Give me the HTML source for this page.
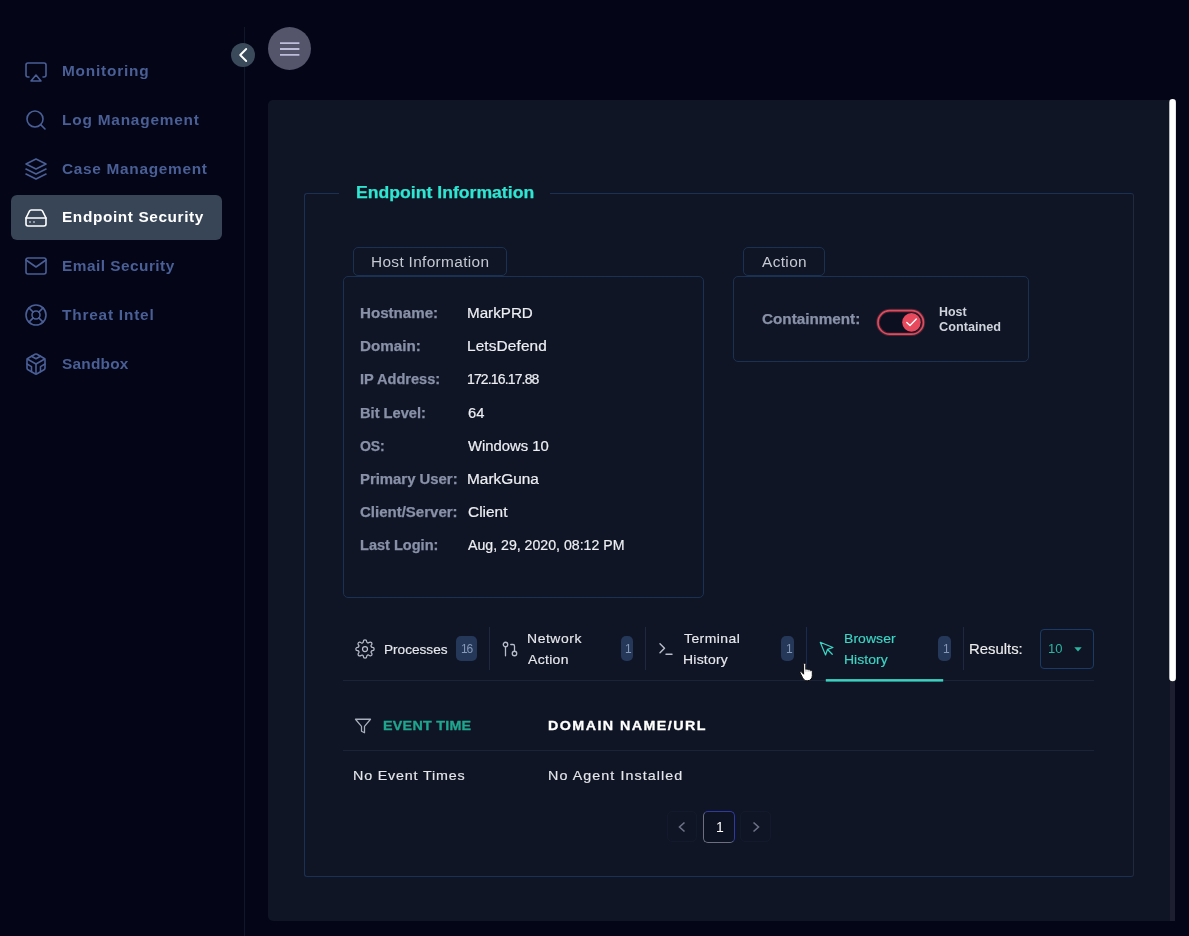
<!DOCTYPE html>
<html lang="en"><head><meta charset="utf-8"><title>Endpoint Security</title>
<style>
html,body{margin:0;padding:0}
body{width:1189px;height:936px;overflow:hidden;background:#040517;font-family:"Liberation Sans",sans-serif;position:relative}
.t{position:absolute;line-height:20px;white-space:nowrap;margin:0;transform-origin:0 50%;will-change:transform}
.i{position:absolute;display:block;overflow:visible}
.a{position:absolute;box-sizing:border-box}
ul{list-style:none;margin:0;padding:0}
#side{position:absolute;left:0;top:0;width:245px;height:936px}
#side .rule{left:244px;top:27px;width:1px;height:909px;background:#10172a}
#side li.on::before{content:"";position:absolute;left:11px;top:195px;width:211px;height:45px;border-radius:6px;background:#374557}
#collapse{left:231px;top:43px;width:24px;height:24px;border-radius:50%;background:#3a4a5b}
#burger{left:268px;top:27px;width:43px;height:43px;border-radius:50%;background:#54546a}
#panel{left:268px;top:100px;width:907px;height:821px;background:#0f1525;border-radius:5px 0 0 5px}
#track{left:1170px;top:100px;width:5px;height:821px;background:#1d1f30}
.bx{border:1px solid #1b3152;border-radius:5px}
#fs{left:304px;top:193px;width:830px;height:684px;border:1px solid #1a3153;border-right-color:#212a3c;border-radius:3px}
#lgap{left:339px;top:192px;width:211px;height:3px;background:#0f1525}
.badge{background:#25385a;border-radius:5px;top:636px;height:25px}
.dv{top:627px;width:1px;height:43px;background:#1d2940}
.hr{height:1px;background:#1b2437;left:343px;width:751px}
</style></head>
<body>
<nav id="side">
<div class="a rule"></div>
<ul>
<li><svg class="i" style="left:24px;top:59.8px" width="24" height="24" viewBox="0 0 24 24" fill="none" stroke="#4a5f96" stroke-width="1.6" stroke-linecap="round" stroke-linejoin="round" ><path d="M5 17H4a2 2 0 0 1-2-2V5a2 2 0 0 1 2-2h16a2 2 0 0 1 2 2v10a2 2 0 0 1-2 2h-1"/><polygon points="12 15 17 21 7 21 12 15"/></svg><span class="t" style="left:61.80px;top:61.15px;font-size:14px;font-weight:bold;color:#4a5f96;letter-spacing:0.714px;transform:scaleX(1.100);">Monitoring</span></li>
<li><svg class="i" style="left:24px;top:108.3px" width="24" height="24" viewBox="0 0 24 24" fill="none" stroke="#4a5f96" stroke-width="1.6" stroke-linecap="round" stroke-linejoin="round" ><circle cx="11" cy="11" r="8"/><line x1="21" y1="21" x2="16.65" y2="16.65"/></svg><span class="t" style="left:61.80px;top:109.90px;font-size:14px;font-weight:bold;color:#4a5f96;letter-spacing:0.720px;transform:scaleX(1.100);">Log Management</span></li>
<li><svg class="i" style="left:24px;top:157.1px" width="24" height="24" viewBox="0 0 24 24" fill="none" stroke="#4a5f96" stroke-width="1.6" stroke-linecap="round" stroke-linejoin="round" ><polygon points="12 2 2 7 12 12 22 7 12 2"/><polyline points="2 17 12 22 22 17"/><polyline points="2 12 12 17 22 12"/></svg><span class="t" style="left:61.80px;top:158.65px;font-size:14px;font-weight:bold;color:#4a5f96;letter-spacing:0.630px;transform:scaleX(1.100);">Case Management</span></li>
<li class="on"><svg class="i" style="left:24px;top:205.8px" width="24" height="24" viewBox="0 0 24 24" fill="none" stroke="#ffffff" stroke-width="1.6" stroke-linecap="round" stroke-linejoin="round" ><line x1="22" y1="12" x2="2" y2="12"/><path d="M5.45 5.11L2 12v6a2 2 0 0 0 2 2h16a2 2 0 0 0 2-2v-6l-3.45-6.89A2 2 0 0 0 16.76 4H7.24a2 2 0 0 0-1.79 1.11z"/><line x1="6" y1="16" x2="6.01" y2="16"/><line x1="10" y1="16" x2="10.01" y2="16"/></svg><span class="t" style="left:61.80px;top:207.40px;font-size:14px;font-weight:bold;color:#ffffff;letter-spacing:0.545px;transform:scaleX(1.100);">Endpoint Security</span></li>
<li><svg class="i" style="left:24px;top:254.3px" width="24" height="24" viewBox="0 0 24 24" fill="none" stroke="#4a5f96" stroke-width="1.6" stroke-linecap="round" stroke-linejoin="round" ><path d="M4 4h16c1.1 0 2 .9 2 2v12c0 1.1-.9 2-2 2H4c-1.1 0-2-.9-2-2V6c0-1.1.9-2 2-2z"/><polyline points="22,6 12,13 2,6"/></svg><span class="t" style="left:61.80px;top:256.15px;font-size:14px;font-weight:bold;color:#4a5f96;letter-spacing:0.428px;transform:scaleX(1.100);">Email Security</span></li>
<li><svg class="i" style="left:24px;top:303.0px" width="24" height="24" viewBox="0 0 24 24" fill="none" stroke="#4a5f96" stroke-width="1.6" stroke-linecap="round" stroke-linejoin="round" ><circle cx="12" cy="12" r="10"/><circle cx="12" cy="12" r="4"/><line x1="4.93" y1="4.93" x2="9.17" y2="9.17"/><line x1="14.83" y1="14.83" x2="19.07" y2="19.07"/><line x1="14.83" y1="9.17" x2="19.07" y2="4.93"/><line x1="4.93" y1="19.07" x2="9.17" y2="14.83"/></svg><span class="t" style="left:61.80px;top:304.90px;font-size:14px;font-weight:bold;color:#4a5f96;letter-spacing:0.717px;transform:scaleX(1.100);">Threat Intel</span></li>
<li><svg class="i" style="left:24px;top:351.8px" width="24" height="24" viewBox="0 0 24 24" fill="none" stroke="#4a5f96" stroke-width="1.6" stroke-linecap="round" stroke-linejoin="round" ><path d="M21 16V8a2 2 0 0 0-1-1.73l-7-4a2 2 0 0 0-2 0l-7 4A2 2 0 0 0 3 8v8a2 2 0 0 0 1 1.73l7 4a2 2 0 0 0 2 0l7-4A2 2 0 0 0 21 16z"/><polyline points="7.5 4.21 12 6.81 16.5 4.21"/><polyline points="7.5 19.79 7.5 14.6 3 12"/><polyline points="21 12 16.5 14.6 16.5 19.79"/><polyline points="3.27 6.96 12 12.01 20.73 6.96"/><line x1="12" y1="22.08" x2="12" y2="12"/></svg><span class="t" style="left:61.80px;top:353.65px;font-size:14px;font-weight:bold;color:#4a5f96;letter-spacing:0.202px;transform:scaleX(1.100);">Sandbox</span></li>
</ul>
</nav>
<div class="a" id="collapse"><svg class="i" style="left:0px;top:0px" width="24" height="24" viewBox="0 0 24 24" fill="none" stroke="#ffffff" stroke-width="1.9" stroke-linecap="round" stroke-linejoin="round" ><polyline points="15.2 18 9.2 12 15.2 6"/></svg></div>
<div class="a" id="burger"><svg class="i" style="left:12px;top:15px" width="20" height="14" viewBox="0 0 20 14"><path d="M0 1.1h19.4M0 7h19.4M0 12.9h19.4" stroke="#bdbdda" stroke-width="1.9" fill="none"/></svg></div>
<main>
<div class="a" id="panel"></div>
<div class="a" id="track"></div>
<svg class="i" id="thumb" style="left:1165px;top:95px" width="16" height="592" viewBox="0 0 16 592"><rect x="4.3" y="4.1" width="6.6" height="582.2" rx="3.3" fill="#fff"/></svg>
<section>
<div class="a" id="fs"></div>
<div class="a" id="lgap"></div>
<span class="t" style="left:355.60px;top:182.76px;font-size:16px;font-weight:bold;color:#2ee6d1;letter-spacing:0.011px;transform:scaleX(1.100);-webkit-text-stroke:.25px currentColor;">Endpoint Information</span>
<div class="a bx" style="left:353px;top:247px;width:154px;height:29px;border-radius:5px"></div>
<div class="a bx" style="left:343px;top:276px;width:361px;height:322px;background:#0f1525"></div>
<span class="t" style="left:370.90px;top:251.55px;font-size:14px;font-weight:normal;color:#c5c9d2;letter-spacing:0.302px;transform:scaleX(1.100);">Host Information</span>
<div class="a bx" style="left:743px;top:247px;width:82px;height:29px;border-radius:5px"></div>
<div class="a bx" style="left:733px;top:276px;width:296px;height:86px;background:#0f1525"></div>
<span class="t" style="left:761.90px;top:251.55px;font-size:14px;font-weight:normal;color:#c5c9d2;letter-spacing:0.339px;transform:scaleX(1.100);">Action</span>
<div id="hostinfo">
<span class="t" style="left:360.00px;top:303.15px;font-size:14px;font-weight:bold;color:#8891a8;letter-spacing:0.000px;transform:scaleX(1.080);-webkit-text-stroke:.25px currentColor;">Hostname:</span>
<span class="t" style="left:466.62px;top:303.15px;font-size:14px;font-weight:normal;color:#eceef2;letter-spacing:0.000px;transform:scaleX(1.085);-webkit-text-stroke:.2px currentColor;">MarkPRD</span>
<span class="t" style="left:360.00px;top:336.28px;font-size:14px;font-weight:bold;color:#8891a8;letter-spacing:0.000px;transform:scaleX(1.084);-webkit-text-stroke:.25px currentColor;">Domain:</span>
<span class="t" style="left:466.60px;top:336.28px;font-size:14px;font-weight:normal;color:#eceef2;letter-spacing:0.111px;transform:scaleX(1.100);-webkit-text-stroke:.2px currentColor;">LetsDefend</span>
<span class="t" style="left:360.00px;top:369.41px;font-size:14px;font-weight:bold;color:#8891a8;letter-spacing:-0.000px;transform:scaleX(1.040);-webkit-text-stroke:.25px currentColor;">IP Address:</span>
<span class="t" style="left:466.70px;top:369.41px;font-size:14px;font-weight:normal;color:#eceef2;letter-spacing:-0.851px;transform:scaleX(1.000);-webkit-text-stroke:.2px currentColor;">172.16.17.88</span>
<span class="t" style="left:360.00px;top:402.54px;font-size:14px;font-weight:bold;color:#8891a8;letter-spacing:0.000px;transform:scaleX(1.047);-webkit-text-stroke:.25px currentColor;">Bit Level:</span>
<span class="t" style="left:467.70px;top:402.54px;font-size:14px;font-weight:normal;color:#eceef2;letter-spacing:0.000px;transform:scaleX(1.052);-webkit-text-stroke:.2px currentColor;">64</span>
<span class="t" style="left:360.00px;top:435.67px;font-size:14px;font-weight:bold;color:#8891a8;letter-spacing:-0.114px;transform:scaleX(1.000);-webkit-text-stroke:.25px currentColor;">OS:</span>
<span class="t" style="left:467.70px;top:435.67px;font-size:14px;font-weight:normal;color:#eceef2;letter-spacing:0.000px;transform:scaleX(1.059);-webkit-text-stroke:.2px currentColor;">Windows 10</span>
<span class="t" style="left:360.00px;top:468.80px;font-size:14px;font-weight:bold;color:#8891a8;letter-spacing:0.000px;transform:scaleX(1.063);-webkit-text-stroke:.25px currentColor;">Primary User:</span>
<span class="t" style="left:466.60px;top:468.80px;font-size:14px;font-weight:normal;color:#eceef2;letter-spacing:0.000px;transform:scaleX(1.100);-webkit-text-stroke:.2px currentColor;">MarkGuna</span>
<span class="t" style="left:360.00px;top:501.93px;font-size:14px;font-weight:bold;color:#8891a8;letter-spacing:0.000px;transform:scaleX(1.072);-webkit-text-stroke:.25px currentColor;">Client/Server:</span>
<span class="t" style="left:467.70px;top:501.93px;font-size:14px;font-weight:normal;color:#eceef2;letter-spacing:0.019px;transform:scaleX(1.100);-webkit-text-stroke:.2px currentColor;">Client</span>
<span class="t" style="left:360.00px;top:535.06px;font-size:14px;font-weight:bold;color:#8891a8;letter-spacing:0.000px;transform:scaleX(1.039);-webkit-text-stroke:.25px currentColor;">Last Login:</span>
<span class="t" style="left:467.70px;top:535.06px;font-size:14px;font-weight:normal;color:#eceef2;letter-spacing:0.000px;transform:scaleX(1.010);-webkit-text-stroke:.2px currentColor;">Aug, 29, 2020, 08:12 PM</span>
</div>
<div id="action">
<span class="t" style="left:762.10px;top:309.15px;font-size:14px;font-weight:bold;color:#8891a8;letter-spacing:0.000px;transform:scaleX(1.089);-webkit-text-stroke:.25px currentColor;">Containment:</span>
<svg class="i" style="left:875px;top:308px" width="52" height="30" viewBox="0 0 52 30"><rect x="3" y="2.6" width="45.400" height="23.600" rx="11.800" fill="#0b0f1f" stroke="rgba(222,76,94,.28)" stroke-width="3.6"/><rect x="3" y="2.600" width="45.400" height="23.600" rx="11.800" fill="none" stroke="#de4c5e" stroke-width="1.7"/><circle cx="36.500" cy="14.350" r="9.300" fill="#e8495d"/><polyline points="31.800 14.400 35 17.500 41.300 11" fill="none" stroke="#fff" stroke-width="1.400" stroke-linecap="round" stroke-linejoin="round"/></svg>
<span class="t" style="left:938.90px;top:301.84px;font-size:12px;font-weight:bold;color:#cfd3dc;letter-spacing:-0.000px;transform:scaleX(1.035);">Host</span>
<span class="t" style="left:938.90px;top:316.54px;font-size:12px;font-weight:bold;color:#cfd3dc;letter-spacing:0.000px;transform:scaleX(1.058);">Contained</span>
</div>
<div id="tabs">
<svg class="i" style="left:354.75px;top:638.6px" width="20" height="20" viewBox="0 0 24 24" fill="none" stroke="#b9bdcb" stroke-width="1.5" stroke-linecap="round" stroke-linejoin="round" ><circle cx="12" cy="12" r="3"/><path d="M19.4 15a1.65 1.65 0 0 0 .33 1.82l.06.06a2 2 0 0 1 0 2.83 2 2 0 0 1-2.83 0l-.06-.06a1.65 1.65 0 0 0-1.82-.33 1.65 1.65 0 0 0-1 1.51V21a2 2 0 0 1-2 2 2 2 0 0 1-2-2v-.09A1.65 1.65 0 0 0 9 19.4a1.65 1.65 0 0 0-1.82.33l-.06.06a2 2 0 0 1-2.83 0 2 2 0 0 1 0-2.83l.06-.06a1.65 1.65 0 0 0 .33-1.82 1.65 1.65 0 0 0-1.51-1H3a2 2 0 0 1-2-2 2 2 0 0 1 2-2h.09A1.65 1.65 0 0 0 4.6 9a1.65 1.65 0 0 0-.33-1.82l-.06-.06a2 2 0 0 1 0-2.83 2 2 0 0 1 2.83 0l.06.06a1.65 1.65 0 0 0 1.82.33H9a1.65 1.65 0 0 0 1-1.51V3a2 2 0 0 1 2-2 2 2 0 0 1 2 2v.09a1.65 1.65 0 0 0 1 1.51 1.65 1.65 0 0 0 1.82-.33l.06-.06a2 2 0 0 1 2.83 0 2 2 0 0 1 0 2.83l-.06.06a1.65 1.65 0 0 0-.33 1.82V9a1.65 1.65 0 0 0 1.51 1H21a2 2 0 0 1 2 2 2 2 0 0 1-2 2h-.09a1.65 1.65 0 0 0-1.51 1z"/></svg>
<span class="t" style="left:383.63px;top:639.60px;font-size:12.7px;font-weight:normal;color:#e6e8ec;letter-spacing:0.000px;transform:scaleX(1.073);-webkit-text-stroke:.15px currentColor;">Processes</span>
<div class="a badge" style="left:456px;width:21px"></div><span class="t" style="left:460.50px;top:639.14px;font-size:12px;font-weight:normal;color:#8798b6;letter-spacing:-1.174px;transform:scaleX(1.000);">16</span>
<div class="a dv" style="left:489px"></div>
<svg class="i" style="left:500.6px;top:639.8px" width="18" height="18" viewBox="0 0 24 24" fill="none" stroke="#b9bdcb" stroke-width="1.7" stroke-linecap="round" stroke-linejoin="round" ><circle cx="18" cy="18" r="3"/><circle cx="6" cy="6" r="3"/><path d="M13 6h3a2 2 0 0 1 2 2v7"/><line x1="6" y1="9" x2="6" y2="21"/></svg>
<span class="t" style="left:526.50px;top:628.80px;font-size:12.7px;font-weight:normal;color:#e6e8ec;letter-spacing:0.499px;transform:scaleX(1.100);-webkit-text-stroke:.15px currentColor;">Network</span>
<span class="t" style="left:527.60px;top:649.80px;font-size:12.7px;font-weight:normal;color:#e6e8ec;letter-spacing:0.304px;transform:scaleX(1.100);-webkit-text-stroke:.15px currentColor;">Action</span>
<div class="a badge" style="left:621px;width:12px"></div><span class="t" style="left:625.20px;top:639.14px;font-size:12px;font-weight:normal;color:#8798b6;letter-spacing:0.000px;transform:scaleX(1.000);">1</span>
<div class="a dv" style="left:645px"></div>
<svg class="i" style="left:656.5px;top:639.7px" width="18" height="18" viewBox="0 0 24 24" fill="none" stroke="#b9bdcb" stroke-width="1.9" stroke-linecap="round" stroke-linejoin="round" ><polyline points="4 17 10 11 4 5"/><line x1="12" y1="19" x2="20" y2="19"/></svg>
<span class="t" style="left:684.40px;top:628.80px;font-size:12.7px;font-weight:normal;color:#e6e8ec;letter-spacing:0.398px;transform:scaleX(1.100);-webkit-text-stroke:.15px currentColor;">Terminal</span>
<span class="t" style="left:683.30px;top:649.80px;font-size:12.7px;font-weight:normal;color:#e6e8ec;letter-spacing:0.205px;transform:scaleX(1.100);-webkit-text-stroke:.15px currentColor;">History</span>
<div class="a badge" style="left:781px;width:13px"></div><span class="t" style="left:785.70px;top:639.14px;font-size:12px;font-weight:normal;color:#8798b6;letter-spacing:0.000px;transform:scaleX(1.000);">1</span>
<div class="a dv" style="left:806px;background:#182c4e"></div>
<svg class="i" style="left:817.6px;top:639.7px" width="18" height="18" viewBox="0 0 24 24" fill="none" stroke="#3cd6c4" stroke-width="1.6" stroke-linecap="round" stroke-linejoin="round" ><path d="M3 3l7.07 16.97 2.51-7.39 7.39-2.51L3 3z"/><path d="M13 13l6 6"/></svg>
<span class="t" style="left:843.70px;top:628.80px;font-size:12.7px;font-weight:normal;color:#3cd6c4;letter-spacing:0.070px;transform:scaleX(1.100);-webkit-text-stroke:.15px currentColor;">Browser</span>
<span class="t" style="left:843.70px;top:649.80px;font-size:12.7px;font-weight:normal;color:#3cd6c4;letter-spacing:0.039px;transform:scaleX(1.100);-webkit-text-stroke:.15px currentColor;">History</span>
<div class="a badge" style="left:938px;width:13px"></div><span class="t" style="left:942.70px;top:639.14px;font-size:12px;font-weight:normal;color:#8798b6;letter-spacing:0.000px;transform:scaleX(1.000);">1</span>
<div class="a dv" style="left:963px"></div>
<span class="t" style="left:969.24px;top:638.65px;font-size:14px;font-weight:normal;color:#ececec;letter-spacing:0.000px;transform:scaleX(1.062);-webkit-text-stroke:.15px currentColor;">Results:</span>
<div class="a" style="left:1040px;top:629px;width:54px;height:40px;border:1px solid #1c3a68;border-radius:4px"></div>
<span class="t" style="left:1047.50px;top:638.80px;font-size:13px;font-weight:normal;color:#2bb5a0;letter-spacing:-0.030px;transform:scaleX(1.000);">10</span>
<svg class="i" style="left:1074px;top:646.5px" width="8" height="5" viewBox="0 0 8 5"><path d="M0.3 0.3h7.4L4 4.6z" fill="#2bb5a0"/></svg>
<div class="a hr" style="top:680px"></div>
<svg class="i" style="left:820px;top:676px" width="130" height="8" viewBox="0 0 130 8"><rect x="5.800" y="3.100" width="117.400" height="2.500" fill="#3cd2c1"/></svg>
</div>
<div id="table">
<svg class="i" style="left:353.6px;top:716.7px" width="18" height="18" viewBox="0 0 24 24" fill="none" stroke="#a9afbd" stroke-width="1.7" stroke-linecap="round" stroke-linejoin="round" ><polygon points="22 3 2 3 10 12.46 10 19 14 21 14 12.46 22 3"/></svg>
<span class="t" style="left:382.50px;top:715.90px;font-size:13px;font-weight:bold;color:#1fa68e;letter-spacing:0.235px;transform:scaleX(1.100);-webkit-text-stroke:.3px currentColor;">EVENT TIME</span>
<span class="t" style="left:548.40px;top:715.90px;font-size:13px;font-weight:bold;color:#ffffff;letter-spacing:1.299px;transform:scaleX(1.100);-webkit-text-stroke:.3px currentColor;">DOMAIN NAME/URL</span>
<div class="a hr" style="top:750px"></div>
<span class="t" style="left:352.90px;top:765.80px;font-size:13px;font-weight:normal;color:#e4e6ea;letter-spacing:0.746px;transform:scaleX(1.100);-webkit-text-stroke:.15px currentColor;">No Event Times</span>
<span class="t" style="left:547.90px;top:765.80px;font-size:13px;font-weight:normal;color:#e4e6ea;letter-spacing:0.968px;transform:scaleX(1.100);-webkit-text-stroke:.15px currentColor;">No Agent Installed</span>
</div>
<div id="pager">
<div class="a" style="left:667px;top:811px;width:30px;height:31px;border:1px solid #131a2b;border-radius:5px"></div>
<svg class="i" style="left:677px;top:821px" width="10" height="12" viewBox="0 0 10 12" fill="none" stroke="#6c7284" stroke-width="1.6"><polyline points="7.5 1.5 2.5 6 7.5 10.5"/></svg>
<div class="a" style="left:703px;top:811px;width:32px;height:32px;border:1.5px solid;border-color:#2e3aa0 #2e3aa0 #6b6f80 #6b6f80;border-radius:5px;background:#0d1323"></div>
<span class="t" style="left:715.50px;top:817.15px;font-size:14px;font-weight:normal;color:#ffffff;letter-spacing:0.000px;transform:scaleX(1.000);">1</span>
<div class="a" style="left:740px;top:811px;width:31px;height:31px;border:1px solid #131a2b;border-radius:5px"></div>
<svg class="i" style="left:751px;top:821px" width="10" height="12" viewBox="0 0 10 12" fill="none" stroke="#6c7284" stroke-width="1.6"><polyline points="2.5 1.5 7.5 6 2.5 10.5"/></svg>
</div>
</section>
</main>
<svg class="i" style="left:799px;top:662px" width="16" height="21" viewBox="0 0 16 21"><path d="M4.6 2.3c0-1.400 2.200-1.400 2.200 0V7.400c.9-.5 1.900-.3 2.300.4.800-.4 1.800-.1 2.100.6 1-.3 2.100.2 2.100 1.300v3.800c0 2.700-1.600 5.200-4.600 5.200h-.9c-2 0-3.200-1-4.200-3L1.100 10.900c-.5-1 .7-1.900 1.500-1l2 2.300z" fill="#fff" stroke="#0a0a0a" stroke-width="1" stroke-linejoin="round"/><path d="M6.900 7.600v2.200M9.100 8v1.800M11.200 8.600v1.400" stroke="#888" stroke-width=".6" fill="none"/></svg>
</body></html>
